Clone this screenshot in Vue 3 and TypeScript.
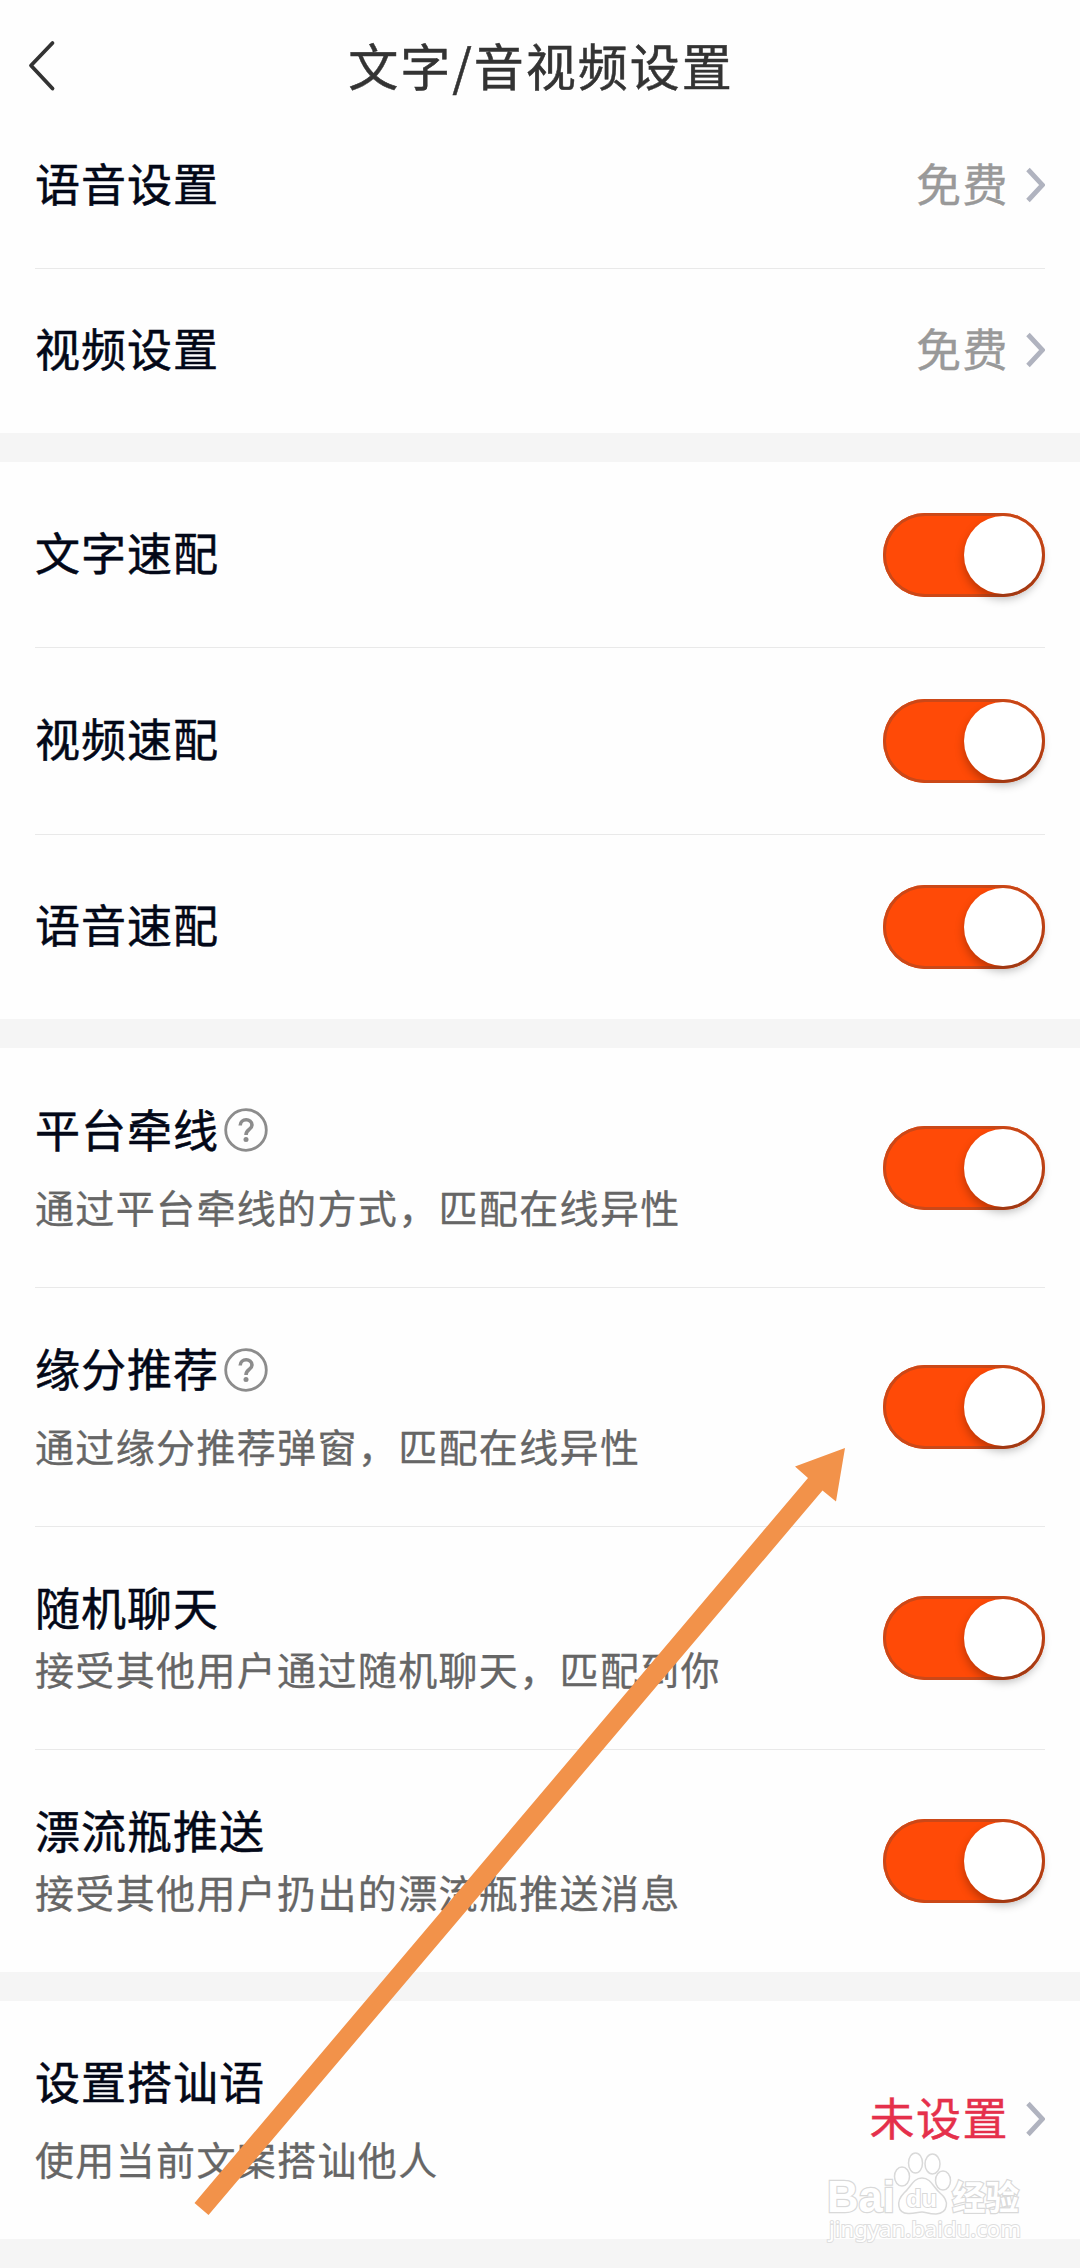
<script setup lang="ts">
interface Row {
  title: string
  sub?: string
  value?: string
  danger?: boolean
  help?: boolean
  height: number
  tight?: boolean
}

const groups: Row[][] = [
  [
    { title: '语音设置', value: '免费', height: 166 },
    { title: '视频设置', value: '免费', height: 164 },
  ],
  [
    { title: '文字速配', height: 186 },
    { title: '视频速配', height: 187 },
    { title: '语音速配', height: 184 },
  ],
  [
    { title: '平台牵线', sub: '通过平台牵线的方式，匹配在线异性', help: true, height: 240 },
    { title: '缘分推荐', sub: '通过缘分推荐弹窗，匹配在线异性', help: true, height: 239 },
    { title: '随机聊天', sub: '接受其他用户通过随机聊天，匹配到你', height: 223, tight: true },
    { title: '漂流瓶推送', sub: '接受其他用户扔出的漂流瓶推送消息', height: 222, tight: true },
  ],
  [{ title: '设置搭讪语', sub: '使用当前文案搭讪他人', value: '未设置', danger: true, height: 238 }],
]
</script>

<template>
  <div class="page">
    <header class="bar">
      <svg class="back" width="34" height="56" viewBox="0 0 34 56">
        <path d="M28.500 5 L7 27.5 L28.500 50.500" />
      </svg>
      <h1>文字/音视频设置</h1>
    </header>

    <section v-for="(group, g) in groups" :key="g" class="group">
      <div v-for="row in group" :key="row.title" class="row" :class="{ tight: row.tight }" :style="{ height: row.height + 'px' }">
        <div class="label">
          <div class="title">
            <span>{{ row.title }}</span>
            <svg v-if="row.help" class="help" width="44" height="44" viewBox="0 0 44 44">
              <circle cx="22" cy="22" r="20.3" />
              <path class="hook" d="M16.2 17.6 C16.2 10 28 10 28 17 C28 21.6 22 21.4 22 27" />
              <circle class="dot" cx="22" cy="31.500" r="2.500" />
            </svg>
          </div>
          <div v-if="row.sub" class="sub">{{ row.sub }}</div>
        </div>
        <div v-if="row.value" class="value" :class="{ danger: row.danger }">
          <span>{{ row.value }}</span>
          <svg width="20" height="36" viewBox="0 0 20 36"><path d="M3 2.500 L17.500 18 L3 33.500" /></svg>
        </div>
        <div v-else class="switch"><i></i></div>
      </div>
    </section>

    <svg class="pointer" width="1080" height="2268" viewBox="0 0 1080 2268">
      <polygon points="845,1448 795,1466.5 808,1478 194.5,2203 208.5,2215 822.5,1490.5 836,1501.5" />
    </svg>

    <svg class="mark" width="220" height="110" viewBox="820 2140 220 110">
      <text x="827" y="2212" class="latin" textLength="68" lengthAdjust="spacingAndGlyphs">Bai</text>
      <ellipse cx="902" cy="2176.500" rx="7.500" ry="9.500" />
      <ellipse cx="915.500" cy="2163" rx="7" ry="10" />
      <ellipse cx="932.500" cy="2164" rx="7.500" ry="10" />
      <ellipse cx="943" cy="2180.500" rx="7.500" ry="9.500" />
      <path d="M922 2178 C931 2178 933 2187 940 2193 C950 2201 948 2213 936 2214 C928 2214 926 2212 922 2212 C917 2212 914 2214 908 2213.500 C897 2213 896 2201 904 2193 C911 2187 913 2178 922 2178 Z" />
      <text x="906" y="2207" class="du" textLength="31" lengthAdjust="spacingAndGlyphs">du</text>
      <text x="952" y="2210" class="cjk" textLength="67" lengthAdjust="spacingAndGlyphs">经验</text>
      <text x="829" y="2237" class="url" textLength="192" lengthAdjust="spacingAndGlyphs">jingyan.baidu.com</text>
    </svg>
  </div>
</template>

<style>
body {
  margin: 0;
  background: #f5f5f5;
}
</style>

<style scoped>
.page {
  position: relative;
  width: 1080px;
  height: 2268px;
  overflow: hidden;
  background: #f5f5f5;
  font-family: 'Noto Sans CJK SC', sans-serif;
}
.bar {
  display: flex;
  align-items: center;
  height: 103px;
  padding: 0 24px;
  background: #fefefe;
  box-sizing: border-box;
}
.back {
  flex: none;
  margin-top: 28px;
}
.back path {
  fill: none;
  stroke: #333;
  stroke-width: 3.8;
  stroke-linecap: round;
  stroke-linejoin: round;
}
h1 {
  flex: 1;
  margin: 25px 32px 0 0;
  text-align: center;
  font-weight: 400;
  font-size: 50px;
  line-height: 60px;
  letter-spacing: 2px;
  color: #333;
  -webkit-text-stroke: 0.5px #333;
}
.group {
  background: #fefefe;
  padding: 0 35px;
  margin-bottom: 29px;
}
.row {
  display: flex;
  align-items: center;
  justify-content: space-between;
  box-sizing: border-box;
  border-bottom: 1px solid #e9e9e9;
}
.row:last-child {
  border-bottom: none;
}
.label {
  padding-bottom: 6px;
}
.title {
  display: flex;
  align-items: center;
  height: 60px;
  font-size: 45px;
  letter-spacing: 1px;
  line-height: 60px;
  color: #030818;
  -webkit-text-stroke: 0.5px #030818;
}
.help {
  margin: 3px 0 0 5px;
}
.help circle,
.help path {
  fill: none;
  stroke: #8c8c8c;
  stroke-width: 2.8;
}
.help .hook {
  stroke-width: 3.6;
}
.help .dot {
  fill: #8c8c8c;
  stroke: none;
}
.sub {
  height: 50px;
  margin-top: 22px;
  font-size: 39px;
  letter-spacing: 1.35px;
  line-height: 50px;
  color: #666;
  -webkit-text-stroke: 0.3px #666;
}
.tight .sub {
  margin-top: 6px;
}
.value {
  display: flex;
  align-items: center;
  gap: 16px;
  font-size: 45px;
  letter-spacing: 1.500px;
  line-height: 60px;
  color: #999;
  -webkit-text-stroke: 0.4px currentColor;
}
.value span {
  margin-top: -6px;
}
.value svg {
  margin-top: -2px;
}
.value path {
  fill: none;
  stroke: #b0b3bf;
  stroke-width: 4.800;
}
.danger {
  color: #e5304b;
}
.switch {
  display: flex;
  justify-content: flex-end;
  width: 162px;
  height: 84px;
  padding: 3px;
  box-sizing: border-box;
  border-radius: 42px;
  background: #ff4a07;
  box-shadow: inset 0 0 0 3px #cb4818;
}
.switch i {
  width: 78px;
  height: 78px;
  border-radius: 50%;
  background: #fff;
  box-shadow: 0 5px 10px rgba(0, 0, 0, 0.28);
}
.pointer {
  position: absolute;
  left: 0;
  top: 0;
}
.pointer polygon {
  fill: #f2924a;
}
.mark {
  position: absolute;
  left: 820px;
  top: 2140px;
  fill: #fff;
  stroke: #d9d9d9;
  stroke-width: 1.5;
}
.mark text {
  paint-order: stroke;
  stroke-width: 2.4;
}
.latin {
  font: 700 44px 'Liberation Sans', sans-serif;
}
.mark .du {
  font: 700 23px 'Liberation Sans', sans-serif;
  stroke-width: 1.8;
}
.cjk {
  font: 700 34px 'Noto Sans CJK SC', sans-serif;
}
.mark .url {
  font: 400 22px 'Noto Sans', sans-serif;
  stroke: #dedede;
  stroke-width: 2;
}
</style>
